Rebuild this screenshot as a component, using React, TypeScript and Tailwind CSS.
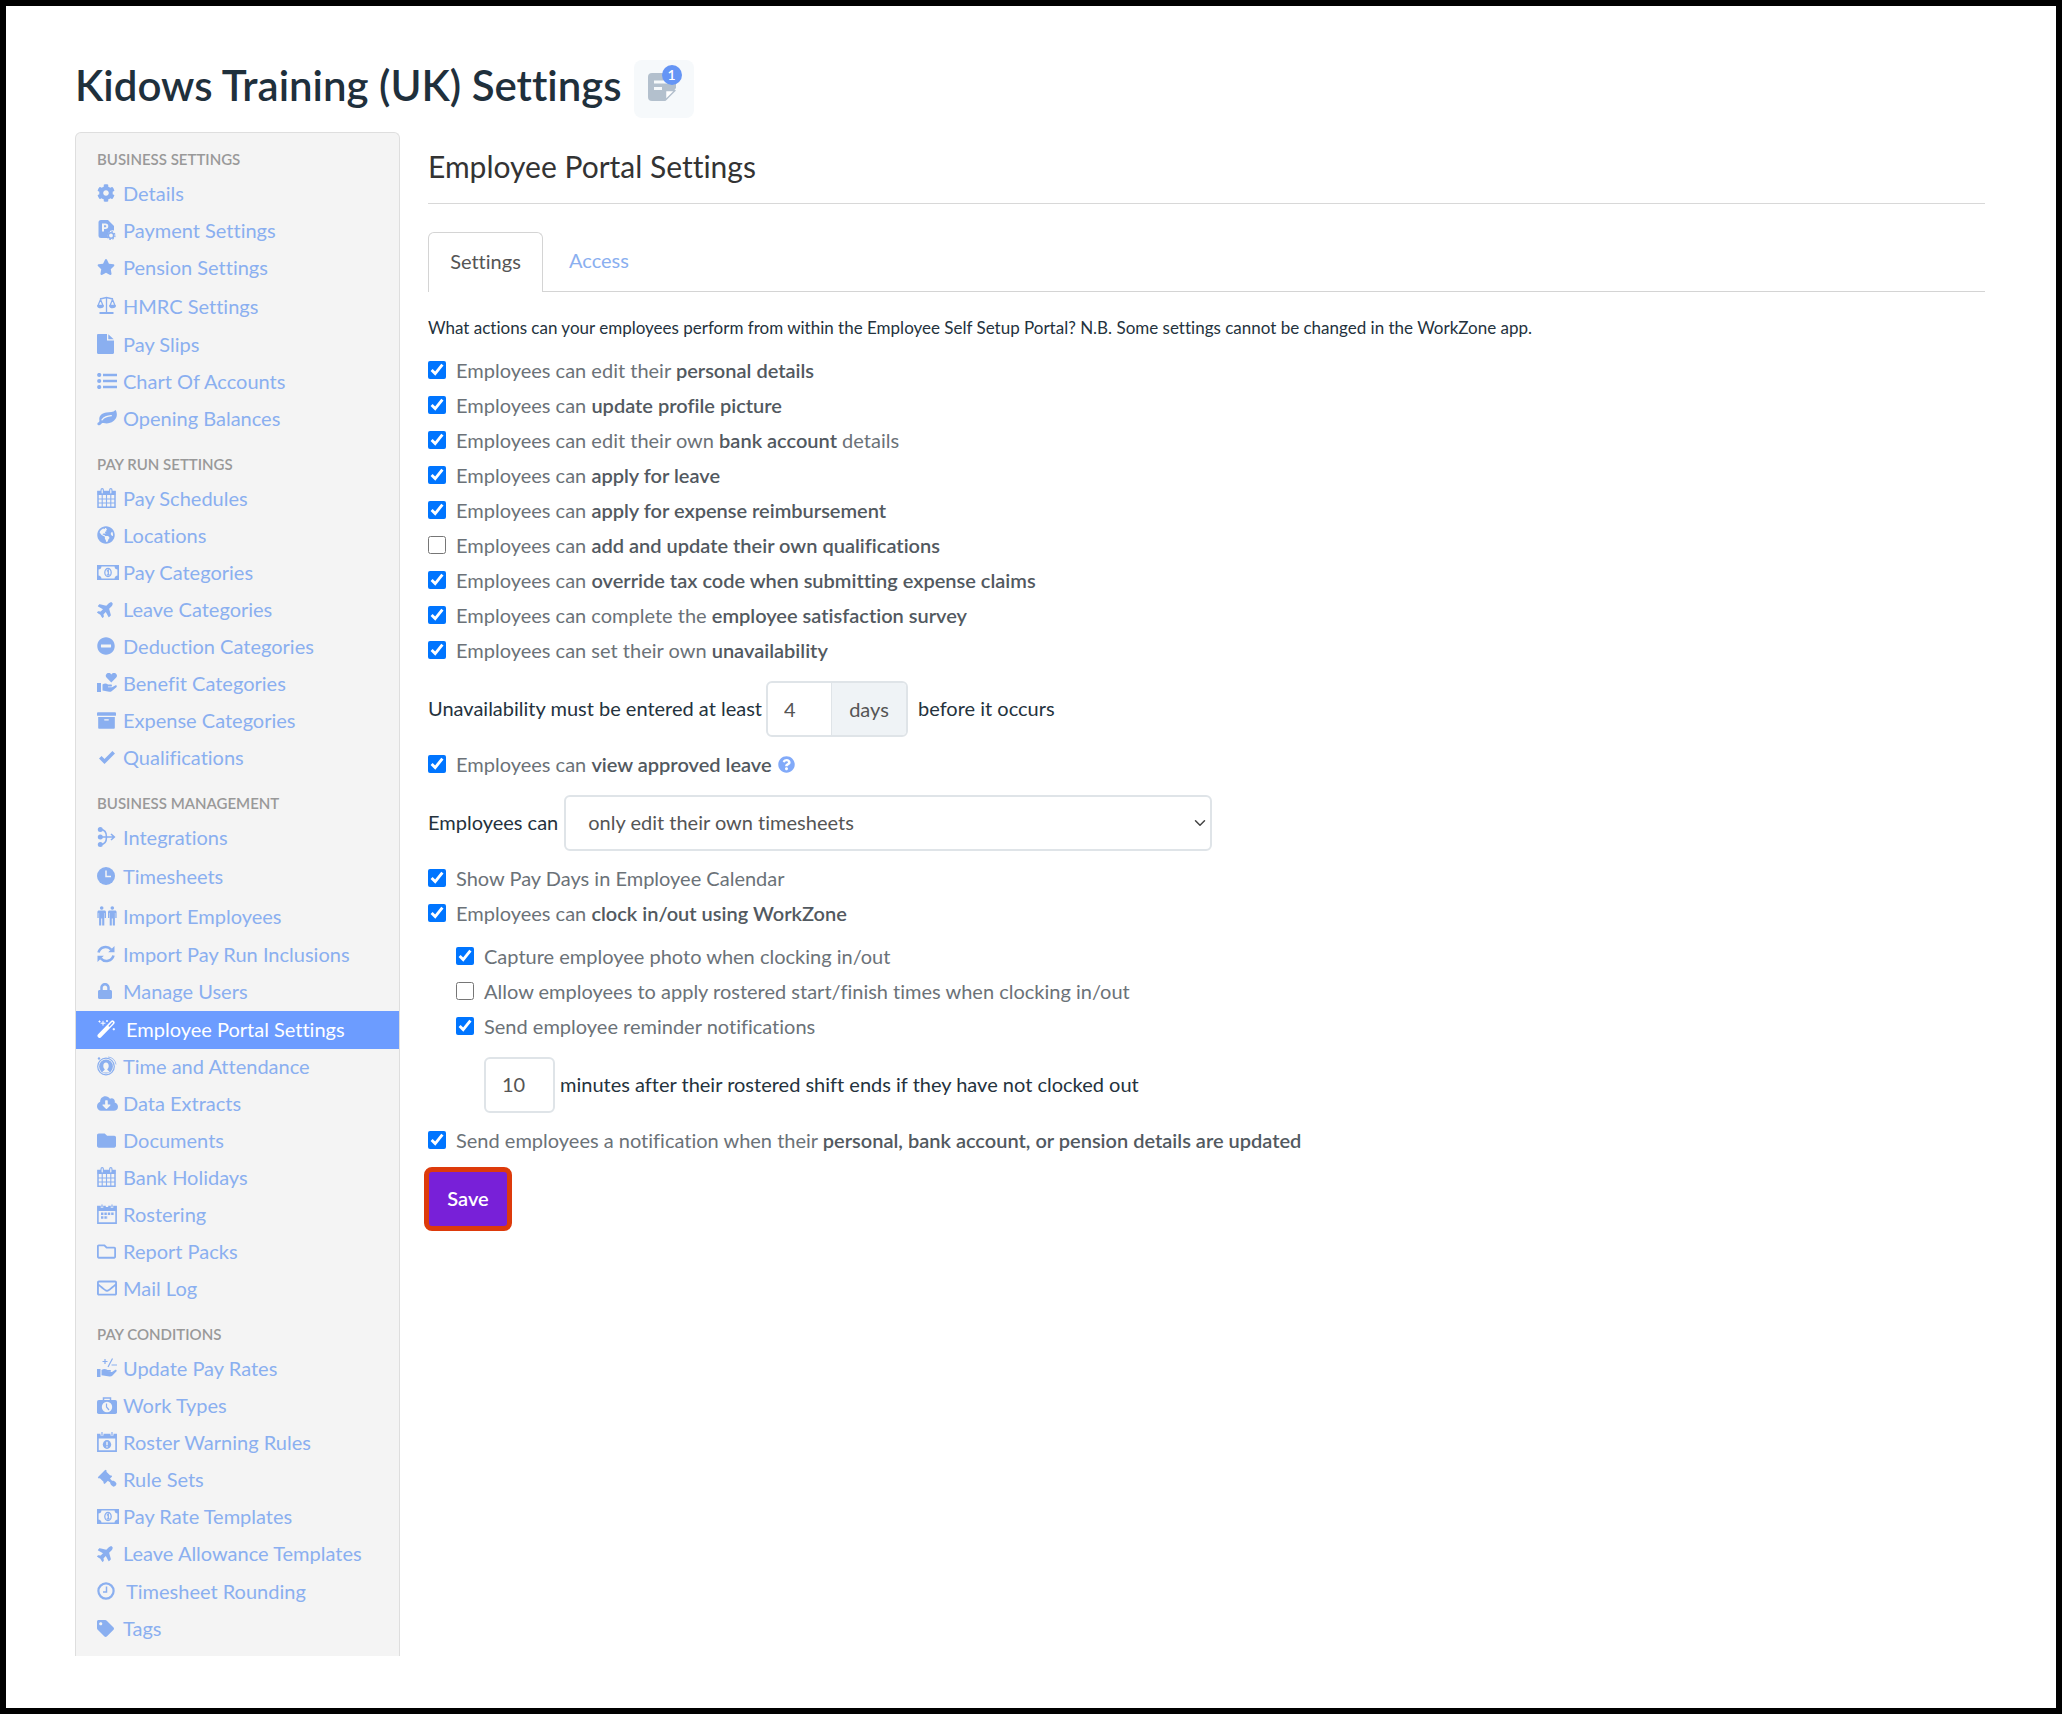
import React from "react";
import { ChevronDown } from "lucide-react";
import {
  FaArchive,
  FaCloudDownloadAlt,
  FaCog,
  FaFolder,
  FaGlobeAmericas,
  FaLock,
  FaMinusCircle,
  FaPlane,
  FaQuestionCircle,
  FaRegEnvelope,
  FaRegFolder,
  FaStar,
  FaTag,
} from "react-icons/fa";

// ============================================================================
// Types
// ============================================================================

interface NavItem {
  label: string;
  icon: React.ReactNode;
  active?: boolean;
  // extra space between the icon and the label
  spaced?: boolean;
  // taller row, used by some of the custom-drawn icons
  tall?: boolean;
}

interface NavGroup {
  title: string;
  items: NavItem[];
}

interface CheckRowProps {
  id: string;
  checked?: boolean;
  children: React.ReactNode;
}

// ============================================================================
// Custom icons
// ============================================================================

const PaymentIcon = () => (
  <svg viewBox="0 0 20 20" className="size-5" fill="currentColor">
    <path
      fillRule="evenodd"
      d="M4 0h7l6 6v4.500a5 5 0 0 0-5.500 7.500H4a2.500 2.500 0 0 1-2.500-2.500v-13A2.500 2.500 0 0 1 4 0Zm1 3.500v8h2V9h1.500a2.750 2.750 0 0 0 0-5.500H5Zm2 1.800h1.300a1 1 0 0 1 0 2H7v-2Z"
    />
    <circle cx="14" cy="15.500" r="2.700" fill="none" stroke="currentColor" strokeWidth="1.600" />
    <circle cx="14" cy="15.500" r="4" fill="none" stroke="currentColor" strokeWidth="1.200" strokeDasharray="1.500 1.640" />
  </svg>
);

const ScaleIcon = () => (
  <svg viewBox="0 0 20 20" className="size-5" fill="none" stroke="currentColor" strokeWidth="1.300">
    <path d="M9.500 1v15.500M3 3 9.500 1.500 16 3M3.500 3.500 1 9.500h5L3.500 3.500Zm12 0L13 9.500h5l-2.500-6Z" />
    <path d="M.8 10h5.400a2.700 1.500 0 0 1-5.400 0Zm12 0h5.400a2.700 1.500 0 0 1-5.400 0Z" fill="currentColor" />
    <path d="M2.500 17h14" strokeWidth="2" />
  </svg>
);

const FileIcon = () => (
  <svg viewBox="0 0 17 20" className="h-5 w-[17px]" fill="currentColor">
    <path d="M1.200 0H10v6.500h7v12.300c0 .7-.5 1.200-1.200 1.200H1.200C.5 20 0 19.500 0 18.800V1.200C0 .5.500 0 1.200 0ZM11.300.3l5.400 5h-5.400v-5Z" />
  </svg>
);

const ListIcon = () => (
  <svg viewBox="0 0 20 16" className="h-4 w-5" stroke="currentColor">
    <path d="M6 2h14M6 8h14M6 14h14" strokeWidth="2.600" />
    <path d="M2.200 2h0M2.200 8h0M2.200 14h0" strokeWidth="4.200" strokeLinecap="round" />
  </svg>
);

const LeafIcon = () => (
  <svg viewBox="0 0 20 16" className="h-4 w-5">
    <path d="M18.600 0c1.600 2.500 1.700 6.300 0 8.800-2.500 3.800-7.500 5.600-12 4.200-1.400-.4-2 .2-2.700 1.300-.8 1.200-2.300 1.400-3.200.4-.9-1.100.2-2 1.200-2.700.5-.4.600-.8.500-1.500C1.500 6 5 3 9.500 2.500c3.200-.3 6.500 0 9.100-2.500Z" fill="currentColor" />
    <path d="M5 9.800c2.500-3 5-3.800 9.300-4.100" fill="none" stroke="#f4f4f4" strokeWidth="1.300" strokeLinecap="round" />
  </svg>
);

const CalendarIcon = () => (
  <svg viewBox="0 0 19 20" className="h-5 w-[19px]" fill="none" stroke="currentColor">
    <path d="M1 3.500h17v15.700H1z" strokeWidth="1.500" />
    <path d="M.5 3h18v4H.5z" fill="currentColor" stroke="none" />
    <path d="M1 11h17M1 15h17M5.200 7v12M9.500 7v12M13.800 7v12" strokeWidth="1.100" />
    <path d="M5.200 1.800v3M13.800 1.800v3" strokeWidth="3.400" strokeLinecap="round" />
    <path d="M5.200 1.800v3M13.800 1.800v3" stroke="#f4f4f4" strokeWidth="1.200" strokeLinecap="round" />
  </svg>
);

const MoneyIcon = () => (
  <svg viewBox="0 0 22 15" className="h-[15px] w-[22px]" fill="none" stroke="currentColor">
    <path d="M.8.800h20.400v13.400H.8z" strokeWidth="1.600" />
    <path d="M1 1h3.500A3.500 3.500 0 0 1 1 4.500V1Zm20 0v3.500A3.500 3.500 0 0 1 17.500 1H21ZM1 14v-3.500A3.500 3.500 0 0 1 4.500 14H1Zm20 0h-3.500a3.500 3.500 0 0 1 3.500-3.500V14Z" fill="currentColor" stroke="none" />
    <ellipse cx="11" cy="7.500" rx="3.200" ry="4" strokeWidth="1.300" />
    <path d="m9.800 6.200 1.500-1v4.500M9.700 9.800h3" strokeWidth="1.300" />
  </svg>
);

const HeartHandIcon = () => (
  <svg viewBox="0 0 20 20" className="size-5" fill="currentColor">
    <path d="M0 10h4v9H0z" />
    <path d="M14.300 9.500 9.700 4.800a2.800 2.800 0 0 1 4-4l.6.600.7-.6a2.800 2.800 0 0 1 4 4l-4.700 4.700Z" />
    <path d="M5.500 11.500c2-1.500 4-1.200 5.500-.1h3c1.300 0 1.300 2 0 2h-3v.8h4l3.200-1.700c1.200-.6 2.200.8 1.200 1.700l-4.500 3.700c-.8.700-1.700 1-2.700.8l-6.700-1.200v-6Z" />
  </svg>
);

const CheckIcon = () => (
  <svg viewBox="0 0 20 16" className="h-4 w-5">
    <path d="m3.300 8.300 4.200 4.200L16.700 3.300" fill="none" stroke="currentColor" strokeWidth="3.600" />
  </svg>
);

const IntegrationIcon = () => (
  <svg viewBox="0 0 19 20" className="h-5 w-[19px]" fill="none" stroke="currentColor" strokeWidth="1.600">
    <path d="M3.500 2.500c4 0 6 2 6 7.500s-2 7.500-6 7.500M3.500 10H17M14 7l3.300 3-3.300 3" />
    <g fill="currentColor" stroke="none">
      <circle cx="3.300" cy="2.600" r="2.500" />
      <circle cx="3.300" cy="10" r="2.500" />
      <circle cx="3.300" cy="17.400" r="2.500" />
    </g>
  </svg>
);

const ClockIcon = () => (
  <svg viewBox="0 0 18 18" className="size-[18px]">
    <circle cx="9" cy="9" r="9" fill="currentColor" />
    <path d="M9 3.500v6h5" fill="none" stroke="#f4f4f4" strokeWidth="1.500" />
  </svg>
);

const ClockOutlineIcon = () => (
  <svg viewBox="0 0 18 18" className="size-[18px]" fill="none" stroke="currentColor">
    <circle cx="9" cy="9" r="7.600" strokeWidth="2.200" />
    <path d="M9.500 4.500V10H6" strokeWidth="1.500" />
  </svg>
);

const PeopleIcon = () => (
  <svg viewBox="0 0 20 20" className="size-5" fill="currentColor">
    <circle cx="4.700" cy="2" r="1.800" />
    <path d="M2 4.500h5.400c1 0 1.600.7 1.600 1.600V12H7.700V7h-.4v12.500H5.200V12.500h-1v7H2.100V7h-.4v5H.4V6.100c0-.9.600-1.600 1.600-1.600Z" />
    <circle cx="15.300" cy="2" r="1.800" />
    <path d="M12.600 4.500H18c1 0 1.600.7 1.600 1.600V12h-1.300V7h-.4v12.500h-2.100V12.500h-1v7h-2.100V7h-.4v5H11V6.100c0-.9.600-1.600 1.600-1.600Z" />
  </svg>
);

const RefreshIcon = () => (
  <svg viewBox="0 0 18 18" className="size-[18px]">
    <path d="M1.500 7.500a7.300 7.300 0 0 1 12.600-3M16.500 10.500a7.300 7.300 0 0 1-12.600 3" fill="none" stroke="currentColor" strokeWidth="2.600" />
    <path d="M17.500 1v6.300h-6.300L17.500 1ZM.5 17v-6.300h6.300L.5 17Z" fill="currentColor" />
  </svg>
);

const WandIcon = () => (
  <svg viewBox="0 0 19 18" className="h-[18px] w-[19px]">
    <path d="M2.600 15.800 15.500 2.500" stroke="currentColor" strokeWidth="4.200" strokeLinecap="round" />
    <path d="m12.300 5.900 3-3.100" stroke="#6c9cff" strokeWidth="1.400" strokeLinecap="round" />
    <path d="M6 .8v4.800M3.600 3.200h4.800M2.500.5v2M1.500 1.500h2M10 0v2M9 1h2M16.800 8v2.400M15.600 9.200H18" stroke="currentColor" strokeWidth="1" />
  </svg>
);

const AttendanceIcon = () => (
  <svg viewBox="0 0 20 20" className="size-5">
    <circle cx="9" cy="10.500" r="8.300" fill="none" stroke="currentColor" strokeWidth="1.200" />
    <circle cx="9" cy="10.500" r="6.900" fill="currentColor" />
    <path d="M5.500 16.500c0-2 2.300-1.700 2.300-3.200-1.200-.8-1.500-2-1.500-3.500 0-2 1-3.300 2.700-3.300s2.700 1.300 2.700 3.300c0 1.500-.3 2.700-1.500 3.500 0 1.500 2.300 1.200 2.300 3.200" fill="#f4f4f4" />
    <path d="M11 1a9 9 0 0 1 8 7.500" fill="none" stroke="currentColor" strokeWidth=".8" />
    <circle cx="2" cy="2.500" r="1.200" fill="currentColor" />
  </svg>
);

const RosterIcon = () => (
  <svg viewBox="0 0 20 20" className="size-5" fill="none" stroke="currentColor">
    <path d="M.9 2.500h18.200v16.600H.9z" strokeWidth="1.600" />
    <path d="M.5 2.500h19v4.500H.5z" fill="currentColor" stroke="none" />
    <path d="M5 0v4M10 0v3M15 0v4" stroke="#f4f4f4" strokeWidth="2.400" />
    <path d="M5 .5v3M15 .5v3" strokeWidth="1.200" />
    <path d="M4 9.800h13M4 13.500h7" strokeWidth="2.400" strokeDasharray="2.400 1" />
  </svg>
);

const RosterWarningIcon = () => (
  <svg viewBox="0 0 20 20" className="size-5" fill="none" stroke="currentColor">
    <path d="M.9 2.500h18.200v16.600H.9z" strokeWidth="1.700" />
    <path d="M.5 2h19v4.500H.5z" fill="currentColor" stroke="none" />
    <path d="M5 0v3.500M15 0v3.500" stroke="#f4f4f4" strokeWidth="3" />
    <path d="M5 0v3M15 0v3" strokeWidth="1.200" />
    <ellipse cx="10" cy="12.500" rx="4.200" ry="4.400" fill="currentColor" stroke="none" />
    <path d="M10 9.800v3.500M10 14.300v1.200" stroke="#f4f4f4" strokeWidth="1.400" />
  </svg>
);

const PayRateIcon = () => (
  <svg viewBox="0 0 20 20" className="size-5" fill="currentColor">
    <path d="M0 11h3.500v8H0z" />
    <path d="M4.500 12c2-1.500 4.500-1.200 6 0h2.500c1.300 0 1.300 1.800 0 1.800h-2.500l4.500.2 3-2c1.200-.6 2.200.6 1.300 1.600L15.500 17.500c-.8.800-1.900 1.200-3 1L4.500 17.300V12Z" />
    <path d="M5.500 3.500h5M8 1v5M15.500.5 11 9M14.500 7H20" fill="none" stroke="currentColor" strokeWidth="1.200" />
  </svg>
);

const WorkTypeIcon = () => (
  <svg viewBox="0 0 20 17" className="h-[17px] w-5">
    <path d="M6.500 3.500V1h7v2.500" fill="none" stroke="currentColor" strokeWidth="1.500" />
    <rect y="3" width="20" height="14" rx="1.800" fill="currentColor" />
    <circle cx="10" cy="10" r="5.200" fill="#f4f4f4" />
    <path d="M9.500 6.500V10l2.500 3" fill="none" stroke="currentColor" strokeWidth="1.200" />
  </svg>
);

const GavelIcon = () => (
  <svg viewBox="0 0 20 20" className="size-5" fill="currentColor">
    <path d="m.8 8.200 7.500-7.400 1.500 1-.4 1 3.800 3.800 1-.4.900 1.400-7.400 7.500-1.400-1 .4-1L2.900 9.300l-1.200.3z" />
    <path d="m9 10.500 2.500-2.500 3.500 3.800c1.500-.3 2.400.2 3.200 1l1 1.200c1.200 1.500-1.800 4.700-3.500 3.300l-1.600-1.400c-.7-.8-1-1.500-.9-2.400L9 10.500Z" />
  </svg>
);

const NoteIcon = () => (
  <svg viewBox="0 0 28 28" className="size-7">
    <path d="M4 0h20a4 4 0 0 1 4 4v11L17 28H4a4 4 0 0 1-4-4V4a4 4 0 0 1 4-4Z" fill="#b3c0cd" />
    <path d="M6 9h14M6 15.500h8" stroke="#f6f9fb" strokeWidth="3" />
    <path d="M17.500 27V17.500H27Z" fill="#fff" stroke="#b3c0cd" strokeWidth="1.500" strokeLinejoin="round" />
  </svg>
);

// ============================================================================
// Data
// ============================================================================

const navGroups: NavGroup[] = [
  {
    title: "BUSINESS SETTINGS",
    items: [
      { label: "Details", icon: <FaCog size={18} /> },
      { label: "Payment Settings", icon: <PaymentIcon /> },
      { label: "Pension Settings", icon: <FaStar size={18} /> },
      { label: "HMRC Settings", icon: <ScaleIcon />, tall: true },
      { label: "Pay Slips", icon: <FileIcon /> },
      { label: "Chart Of Accounts", icon: <ListIcon /> },
      { label: "Opening Balances", icon: <LeafIcon /> },
    ],
  },
  {
    title: "PAY RUN SETTINGS",
    items: [
      { label: "Pay Schedules", icon: <CalendarIcon /> },
      { label: "Locations", icon: <FaGlobeAmericas size={18} /> },
      { label: "Pay Categories", icon: <MoneyIcon /> },
      { label: "Leave Categories", icon: <FaPlane size={18} className="-rotate-45" /> },
      { label: "Deduction Categories", icon: <FaMinusCircle size={18} /> },
      { label: "Benefit Categories", icon: <HeartHandIcon /> },
      { label: "Expense Categories", icon: <FaArchive size={19} /> },
      { label: "Qualifications", icon: <CheckIcon /> },
    ],
  },
  {
    title: "BUSINESS MANAGEMENT",
    items: [
      { label: "Integrations", icon: <IntegrationIcon /> },
      { label: "Timesheets", icon: <ClockIcon />, tall: true },
      { label: "Import Employees", icon: <PeopleIcon />, tall: true },
      { label: "Import Pay Run Inclusions", icon: <RefreshIcon /> },
      { label: "Manage Users", icon: <FaLock size={16} /> },
      { label: "Employee Portal Settings", icon: <WandIcon />, active: true, spaced: true },
      { label: "Time and Attendance", icon: <AttendanceIcon /> },
      { label: "Data Extracts", icon: <FaCloudDownloadAlt size={21} /> },
      { label: "Documents", icon: <FaFolder size={19} /> },
      { label: "Bank Holidays", icon: <CalendarIcon /> },
      { label: "Rostering", icon: <RosterIcon /> },
      { label: "Report Packs", icon: <FaRegFolder size={19} /> },
      { label: "Mail Log", icon: <FaRegEnvelope size={20} /> },
    ],
  },
  {
    title: "PAY CONDITIONS",
    items: [
      { label: "Update Pay Rates", icon: <PayRateIcon /> },
      { label: "Work Types", icon: <WorkTypeIcon /> },
      { label: "Roster Warning Rules", icon: <RosterWarningIcon /> },
      { label: "Rule Sets", icon: <GavelIcon /> },
      { label: "Pay Rate Templates", icon: <MoneyIcon /> },
      { label: "Leave Allowance Templates", icon: <FaPlane size={18} className="-rotate-45" /> },
      { label: "Timesheet Rounding", icon: <ClockOutlineIcon />, spaced: true },
      { label: "Tags", icon: <FaTag size={17} /> },
    ],
  },
];

// ============================================================================
// Components
// ============================================================================

const NavLink: React.FC<{ item: NavItem }> = ({ item }) => {
  const height = item.tall ? "h-10" : item.spaced ? "h-[38px]" : "h-[37px]";
  const color = item.active ? "bg-[#6c9cff] text-white" : "text-[#8aaff0]";
  return (
    <li>
      <a href="#" className={`flex items-center pb-[3px] pl-[21px] ${height} ${color}`}>
        <span className={`shrink-0 ${item.spaced ? "w-[29px]" : "w-[26px]"}`}>{item.icon}</span>
        <span className="whitespace-nowrap">{item.label}</span>
      </a>
    </li>
  );
};

const Sidebar = () => (
  <nav className="w-[325px] shrink-0 rounded-t-md border border-b-0 border-[#dedede] bg-[#f4f4f4] pb-2">
    {navGroups.map((group) => (
      <section key={group.title}>
        <h3 className="pt-[10px] pb-px pl-[21px] text-[15px] leading-8 font-semibold text-[#999]">{group.title}</h3>
        <ul>
          {group.items.map((item) => (
            <NavLink key={item.label} item={item} />
          ))}
        </ul>
      </section>
    ))}
  </nav>
);

const CheckRow: React.FC<CheckRowProps> = ({ id, checked = true, children }) => (
  <div className="flex h-[35px] items-center gap-[10px] pb-[2px]">
    <input id={id} type="checkbox" defaultChecked={checked} className="size-[18px] accent-[#0075ff]" />
    <label htmlFor={id} className="text-[#6b7278] [&>b]:font-semibold [&>b]:text-[#525960]">
      {children}
    </label>
  </div>
);

export default function App() {
  return (
    <div className="min-h-screen border-[6px] border-black bg-white pt-[54px] pr-[71px] pb-[52px] pl-[69px] font-['Lato',sans-serif] text-xl text-[#24323d] [font-variant-ligatures:none]">
      {/* Page title */}
      <header className="mb-[14px] flex h-[58px] items-center gap-3">
        <h1 className="pb-2 text-[42px] leading-none font-semibold text-[#1f303c]">Kidows Training (UK) Settings</h1>
        <button aria-label="Notes" className="relative flex h-[58px] w-[60px] items-center justify-center rounded-lg bg-[#f6f9fb] pr-1 pb-1">
          <NoteIcon />
          <span className="absolute top-[5px] right-[12px] flex size-5 items-center justify-center rounded-full bg-[#6595f5] text-sm font-semibold text-white">
            1
          </span>
        </button>
      </header>

      <div className="flex items-start gap-7">
        <Sidebar />

        <main className="min-w-0 flex-1">
          <h2 className="border-b border-[#d8d8d8] pt-4 pb-[19px] text-3xl leading-9 text-[#333]">
            Employee Portal Settings
          </h2>

          <div className="mt-7 flex h-[60px] border-b border-[#d4d4d4]">
            <a href="#" className="-mb-px flex w-[115px] items-center justify-center rounded-t-md border border-b-0 border-[#d4d4d4] bg-white pb-[3px] text-[#555]">
              Settings
            </a>
            <a href="#" className="flex items-center px-[26px] pb-[3px] text-[#8aaff0]">
              Access
            </a>
          </div>

          <p className="mt-6 text-[17px] leading-6">
            What actions can your employees perform from within the Employee Self Setup Portal? N.B. Some settings
            cannot be changed in the WorkZone app.
          </p>

          <form className="mt-[13px]">
            <CheckRow id="personal">Employees can edit their <b>personal details</b></CheckRow>
            <CheckRow id="picture">Employees can <b>update profile picture</b></CheckRow>
            <CheckRow id="bank">Employees can edit their own <b>bank account</b> details</CheckRow>
            <CheckRow id="leave">Employees can <b>apply for leave</b></CheckRow>
            <CheckRow id="expense">Employees can <b>apply for expense reimbursement</b></CheckRow>
            <CheckRow id="qualifications" checked={false}>Employees can <b>add and update their own qualifications</b></CheckRow>
            <CheckRow id="tax">Employees can <b>override tax code when submitting expense claims</b></CheckRow>
            <CheckRow id="survey">Employees can complete the <b>employee satisfaction survey</b></CheckRow>
            <CheckRow id="unavailability">Employees can set their own <b>unavailability</b></CheckRow>

            <div className="mt-[13px] mb-[10px] flex items-center">
              <label htmlFor="notice" className="pb-[2px]">Unavailability must be entered at least</label>
              <div className="mr-[10px] ml-1 flex h-14 overflow-hidden rounded-md border-2 border-[#dfe4e8] text-[#555]">
                <input id="notice" defaultValue="4" className="w-[63px] pl-4" />
                <span className="flex w-[75px] items-center justify-center border-l border-[#dfe4e8] bg-[#eff3f6]">days</span>
              </div>
              <span className="pb-[2px]">before it occurs</span>
            </div>

            <div className="flex items-center gap-[6px]">
              <CheckRow id="approved">Employees can <b>view approved leave</b></CheckRow>
              <FaQuestionCircle size={17} className="text-[#82aaf9]" />
            </div>

            <div className="mt-[13px] mb-[10px] flex items-center gap-[6px]">
              <label htmlFor="timesheets" className="pb-[2px]">Employees can</label>
              <div className="relative w-[648px]">
                <select id="timesheets" className="h-14 w-full appearance-none rounded-md border-2 border-[#dfe4e8] bg-white pb-[2px] pl-[22px] text-[#555]">
                  <option>only edit their own timesheets</option>
                </select>
                <ChevronDown size={18} className="pointer-events-none absolute top-[19px] right-[3px] text-[#444]" />
              </div>
            </div>

            <CheckRow id="paydays">Show Pay Days in Employee Calendar</CheckRow>
            <CheckRow id="clock">Employees can <b>clock in/out using WorkZone</b></CheckRow>

            <div className="mt-2 pl-7">
              <CheckRow id="photo">Capture employee photo when clocking in/out</CheckRow>
              <CheckRow id="rostered" checked={false}>Allow employees to apply rostered start/finish times when clocking in/out</CheckRow>
              <CheckRow id="reminder">Send employee reminder notifications</CheckRow>
              <div className="mt-[13px] mb-[10px] flex items-center gap-[5px] pl-7">
                <input id="minutes" defaultValue="10" className="h-14 w-[71px] rounded-md border-2 border-[#dfe4e8] pb-[2px] pl-4 text-[#555]" />
                <label htmlFor="minutes" className="pb-[2px]">minutes after their rostered shift ends if they have not clocked out</label>
              </div>
            </div>

            <CheckRow id="notify">Send employees a notification when their <b>personal, bank account, or pension details are updated</b></CheckRow>

            <button type="button" className="mt-[9px] -ml-1 h-16 w-[88px] rounded-lg border-[5px] border-[#dd3a0b] bg-[#7820d8] pb-[3px] font-semibold text-white">
              Save
            </button>
          </form>
        </main>
      </div>
    </div>
  );
}
